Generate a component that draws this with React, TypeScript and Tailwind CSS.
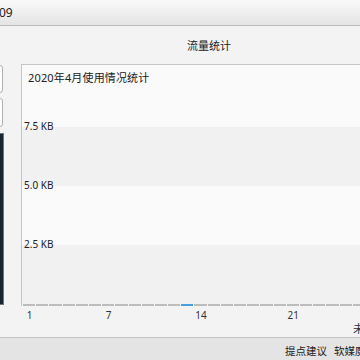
import React from "react";

const days = Array.from({ length: 30 }, (_, i) => i + 1);
const labeled: Record<number, string> = { 1: "1", 7: "7", 14: "14", 21: "21", 28: "28" };

export default function App() {
  return (
    <div
      className="w-[360px] h-[360px] overflow-hidden flex flex-col bg-[#f3f3f3] text-[#333]"
      style={{ fontFamily: '"Noto Sans", "Noto Sans CJK SC", sans-serif' }}
    >
      {/* title bar */}
      <div className="h-[26px] shrink-0 bg-gradient-to-b from-[#fafafa] to-[#e4e4e4] border-b border-[#bcbcbc] flex items-center text-[12px] leading-none">
        <span className="text-[#222] -ml-[1px]">09</span>
      </div>

      {/* body */}
      <div className="flex-1 flex min-h-0 overflow-hidden">
        {/* left column (cut off) */}
        <div className="w-[4px] shrink-0 overflow-hidden flex flex-col pt-[39px]">
          <div className="w-[80px] -ml-[77px] h-[28px] bg-white border border-[#b0b0b0] rounded-[3px] shrink-0" />
          <div className="w-[80px] -ml-[77px] h-[29px] mt-[5px] bg-white border border-[#b0b0b0] rounded-[3px] shrink-0" />
          <div className="w-[80px] -ml-[76px] h-[172px] mt-[6px] bg-[#172530] border border-[#6b7680] shrink-0" />
        </div>

        {/* main */}
        <div className="ml-[17px] flex-1 min-w-0 flex flex-col">
          <div className="w-[376px] h-[38px] shrink-0 flex items-center justify-center text-[11px] leading-none">
            <span className="text-[#222] mt-[1px]">流量统计</span>
          </div>

          <div className="w-[410px] shrink-0 flex flex-col border-l border-t border-[#c6c6c6]">
            {/* header area */}
            <div className="h-[62px] bg-[#fafafa] flex justify-between pl-[6px] pt-[6px] text-[11px] leading-[14px]">
              <span className="text-[#222] tracking-[0.15px]">2020年4月使用情况统计</span>
              <div className="w-[4px] h-[2px] bg-[#d08a3a] mt-[9px] mr-[49px]" />
            </div>
            {[
              { label: "7.5 KB", bg: "bg-[#f1f1f1]" },
              { label: "5.0 KB", bg: "bg-[#fafafa]" },
              { label: "2.5 KB", bg: "bg-[#f1f1f1]" },
            ].map((b) => (
              <div key={b.label} className={`h-[59px] ${b.bg} text-[10px] leading-[12px]`}>
                <div className="pl-[2px] -mt-[7px] text-[#222]">{b.label}</div>
              </div>
            ))}
            {/* axis segments */}
            <div className="flex pl-[1px] bg-[#f1f1f1]">
              {days.map((d) => (
                <div key={d} className="w-[13.2px] shrink-0 pr-[1px]">
                  <div className={`h-[2px] ${d === 13 ? "bg-[#46a0e0]" : "bg-[#bdbdbd]"}`} />
                </div>
              ))}
            </div>
          </div>

          {/* axis labels */}
          <div className="flex pl-[2px] mt-[3px] h-[12px] text-[10px] leading-[12px]">
            {days.map((d) => (
              <div key={d} className="w-[13.2px] shrink-0 flex justify-center overflow-visible">
                <span className="whitespace-nowrap text-[#333]">{labeled[d] ?? ""}</span>
              </div>
            ))}
          </div>
          <div className="pl-[332px] mt-[1px] h-[14px] text-[11px] leading-[14px]">
            <span className="whitespace-nowrap text-[#333]">未使用</span>
          </div>
        </div>
      </div>

      {/* status bar */}
      <div className="h-[23px] shrink-0 border-t border-[#c2c2c2] bg-[#e4e4e4] flex items-center pt-[4px] pl-[285px] gap-[7px] text-[10.5px] leading-none">
        <span className="whitespace-nowrap text-[#222]">提点建议</span>
        <span className="whitespace-nowrap text-[#222]">软媒魔方</span>
      </div>
    </div>
  );
}
